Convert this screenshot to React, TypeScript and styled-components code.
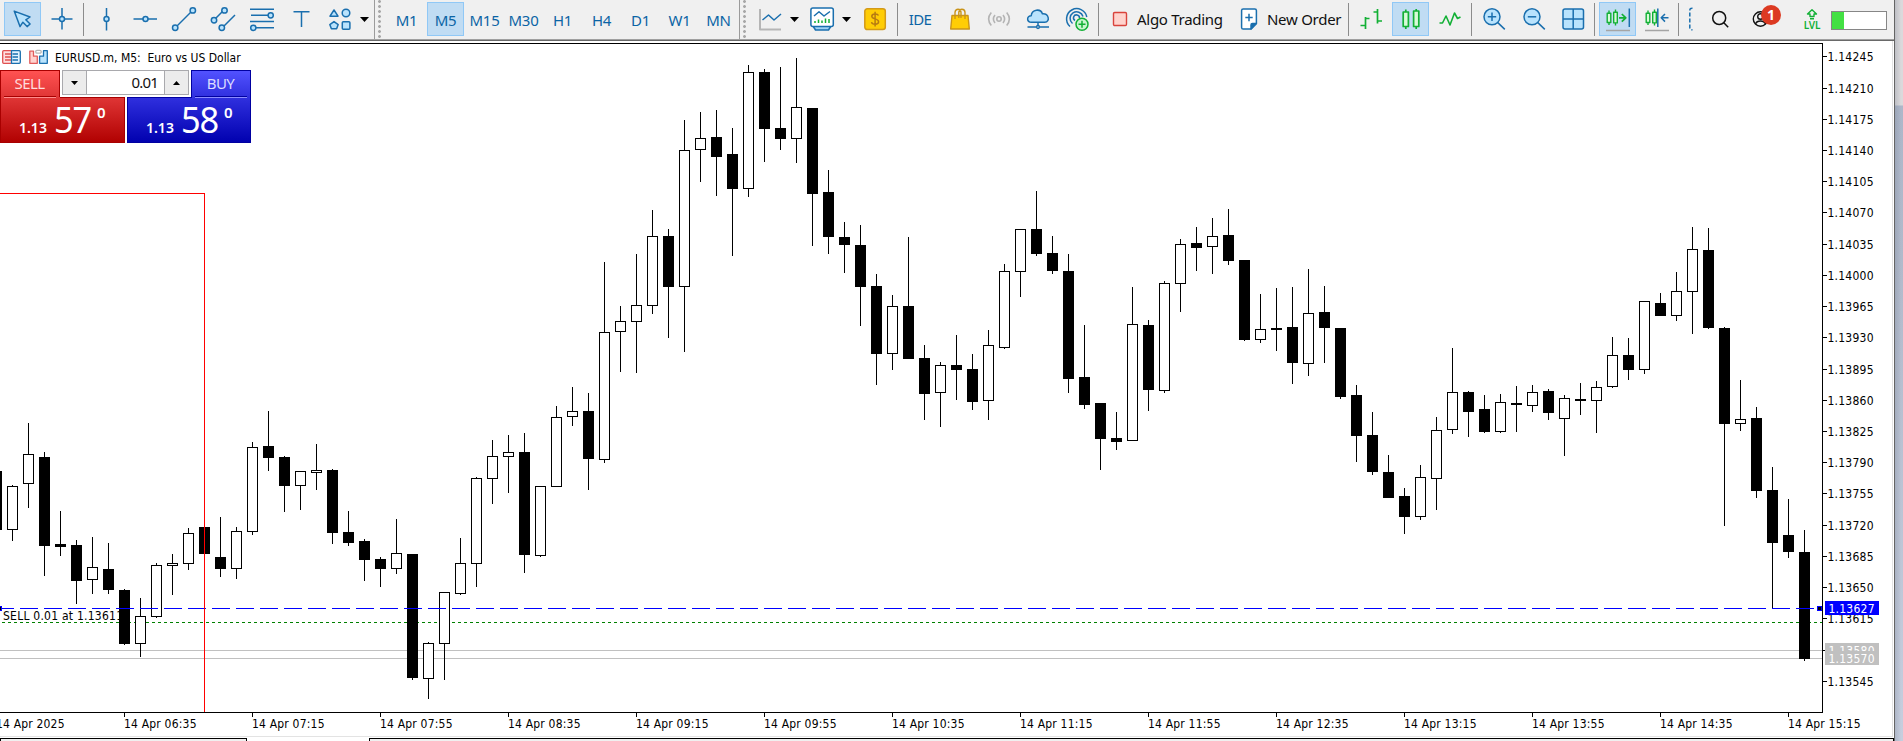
import React from "react";
import styled, { createGlobalStyle, css } from "styled-components";

const UI = `"Noto Sans", "Open Sans", sans-serif`;
const CHART = `"DejaVu Sans Condensed", "DejaVu Sans", sans-serif`;
const BLUE = "#1a6fae";
const FILL = "#b9e3fd";
const GREEN = "#12b035";

const Global = createGlobalStyle`
  html, body { margin: 0; padding: 0; background: #fff; overflow: hidden; }
  * { box-sizing: border-box; }
`;

const Screen = styled.div`
  display: flex;
  width: 1903px;
  height: 741px;
  overflow: hidden;
`;
const Terminal = styled.div`
  display: flex;
  flex-direction: column;
  width: 1894px;
  height: 741px;
  background: #fff;
`;
const WindowEdge = styled.div`
  width: 1px;
  background: #646464;
`;
const Desktop = styled.div`
  flex: 1;
  background: linear-gradient(90deg, rgba(90, 100, 120, 0.22), rgba(255, 255, 255, 0) 6px),
    linear-gradient(#dad9db 0 105px, #adb7c9 106px, #b1bacb 260px, #c6cede 741px);
`;

const Toolbar = styled.div`
  display: flex;
  align-items: flex-start;
  height: 41px;
  padding: 2px 0 0 3px;
  background: #f0f0f0;
  border-bottom: 1px solid #696969;
  box-shadow: inset 0 -1px 0 #a0a0a0;
  flex-shrink: 0;
`;
const Slot = styled.div<{ $w?: number; $ml?: number; $on?: boolean }>`
  display: flex;
  align-items: center;
  justify-content: center;
  flex: none;
  width: ${(p) => (p.$w ?? 39) - 2}px;
  height: 34px;
  margin: 0 1px 0 ${(p) => (p.$ml ?? 0) + 1}px;
  ${(p) =>
    p.$on &&
    css`
      background: #c0dcf3;
      box-shadow: inset 0 0 0 1px #90c8f6;
    `}
`;
const Divider = styled.div`
  flex: none;
  width: 1px;
  height: 33px;
  margin: 1px 2px 0;
  background: #8c8c8c;
`;
const Grip = styled.div<{ $lead: number }>`
  flex: none;
  width: 13px;
  height: 39px;
  margin: -2px 0 0 ${(p) => p.$lead}px;
  border-left: 1px solid #9b9b9b;
  background: radial-gradient(circle at 1.5px 1.5px, #a8a8a8 1.2px, transparent 1.6px) 3px 0 / 3px 5px repeat-y;
`;
const Period = styled.span`
  font: 15px/34px ${UI};
  letter-spacing: -0.3px;
  color: #0b64a5;
  padding-top: 2px;
`;
const Ide = styled(Period)`
  letter-spacing: -0.6px;
  padding-top: 0;
  margin-top: -1px;
`;
const Command = styled.div<{ $w: number; $pad: number }>`
  display: flex;
  align-items: center;
  flex: none;
  gap: 9px;
  width: ${(p) => p.$w}px;
  height: 34px;
  padding-left: ${(p) => p.$pad}px;
  font: 15px/34px ${UI};
  color: #111;
  white-space: nowrap;
  svg { flex: none; }
`;
const CommandLabel = styled.span`
  letter-spacing: -0.28px;
  margin-top: -1px;
`;
const LevelBar = styled.div`
  flex: none;
  width: 56px;
  height: 19px;
  margin: 9px 0 0 2px;
  border: 1px solid #868686;
  background: linear-gradient(90deg, #43e043 12px, #fff 12px);
`;

const ChartArea = styled.div`
  position: relative;
  height: 696px;
  border-right: 1px solid #e3e3e3;
  border-bottom: 1px solid #e3e3e3;
  margin-right: 1px;
  flex: none;
`;
const Plot = styled.svg`
  display: block;
  font: 12px ${CHART};
`;
const Overlay = styled.div`
  position: absolute;
  left: 0;
  top: 0;
  width: 251px;
`;
const Title = styled.div`
  display: flex;
  align-items: center;
  height: 29px;
  padding: 3px 0 0 2px;
  font: 12px ${CHART};
  white-space: pre;
  svg { flex: none; }
`;
const TitleText = styled.span`
  letter-spacing: -0.02px;
  margin-left: 6px;
  padding-top: 1px;
`;
const DealRow = styled.div<{ $gap?: number }>`
  display: flex;
  gap: ${(p) => p.$gap ?? 0}px;
`;
const skins = {
  sell: { a: "#ff5252", b: "#e03636", c: "#b00000", edge: "#a80000", light: "#ff8c8c", text: "#ffdcdc" },
  buy: { a: "#5252ff", b: "#3030df", c: "#0000ae", edge: "#0000a0", light: "#8c8cff", text: "#dcdcff" },
};
type Side = keyof typeof skins;
const DealTab = styled.div<{ $side: Side }>`
  width: 60px;
  height: 27px;
  padding: 0 3px;
  border: 1px solid ${(p) => skins[p.$side].edge};
  border-bottom: 0;
  background: linear-gradient(${(p) => skins[p.$side].a}, ${(p) => skins[p.$side].b});
  color: ${(p) => skins[p.$side].text};
  font: 15px/25px ${UI};
  text-align: center;
`;
const DealLabel = styled.div<{ $side: Side }>`
  height: 26px;
  padding-right: 1px;
  letter-spacing: -0.6px;
  border-bottom: 1px solid ${(p) => skins[p.$side].edge};
`;
const Quote = styled.div<{ $side: Side; $w: number; $from: number; $pad: number }>`
  display: flex;
  align-items: flex-start;
  width: ${(p) => p.$w}px;
  height: 46px;
  padding-left: ${(p) => p.$pad}px;
  color: #fff;
  background: linear-gradient(${(p) => skins[p.$side].edge}, ${(p) => skins[p.$side].edge}) ${(p) => p.$from}px 0 / 65px 1px
      no-repeat,
    linear-gradient(${(p) => skins[p.$side].light}, ${(p) => skins[p.$side].light}) ${(p) => (p.$from ? 4 : 68)}px 0 / 52px 1px
      no-repeat,
    linear-gradient(${(p) => skins[p.$side].b}, ${(p) => skins[p.$side].c});
  box-shadow: inset 1px 0 0 ${(p) => skins[p.$side].edge}, inset -1px -1px 0 ${(p) => skins[p.$side].edge};
`;
const QuoteBase = styled.span`
  width: 35px;
  font: 600 14px/18px ${UI};
  margin-top: 22px;
`;
const QuoteBig = styled.span`
  width: 46px;
  margin: 3px -3px 0 0;
  font: 37px/38px ${UI};
  letter-spacing: -1.2px;
  transform: scaleX(0.93);
  transform-origin: 0 0;
`;
const QuotePip = styled.span`
  font: 600 15px/18px ${UI};
  margin-top: 6px;
`;
const Volume = styled.div`
  display: flex;
  width: 127px;
  height: 25px;
  margin: 0 2px;
  border: 1px solid #a9a9ad;
  background: #fff;
`;
const Step = styled.div<{ $edge: "left" | "right" }>`
  display: flex;
  align-items: center;
  justify-content: center;
  width: 24px;
  background: #ececec;
  border-${(p) => (p.$edge === "left" ? "right" : "left")}: 1px solid #a9a9ad;
`;
const Lots = styled.div`
  flex: 1;
  padding-right: 6px;
  text-align: right;
  font: 15px/22px ${UI};
  letter-spacing: -0.8px;
  color: #111;
`;

const TabStrip = styled.div`
  display: flex;
  height: 3px;
  margin-top: 1px;
`;
const TabEdge = styled.div<{ $w?: number; $open?: boolean }>`
  ${(p) => (p.$w ? `width: ${p.$w}px;` : "flex: 1;")}
  ${(p) =>
    !p.$open &&
    css`
      background: #f0f0f0;
      border: 1px solid #000;
      border-bottom: 0;
    `}
`;

/* Icons */
const Glyph = styled.svg`
  flex: none;
  overflow: visible;
`;
const Ico: React.FC<{ w?: number; h?: number; color?: string; sw?: number; children: React.ReactNode }> = ({
  w = 24, h = 24, color = BLUE, sw = 1.5, children,
}) => (
  <Glyph width={w} height={h} viewBox={`0 0 ${w} ${h}`} fill="none" stroke={color} strokeWidth={sw} strokeLinejoin="round">
    {children}
  </Glyph>
);
const Caret = () => (
  <Ico w={9} h={5}><path d="M0 0H9L4.5 5Z" fill="#000" stroke="none" /></Ico>
);
const Node = ({ x, y, r = 2.5 }: { x: number; y: number; r?: number }) => <circle cx={x} cy={y} r={r} fill={FILL} />;

const CursorIcon = () => <Ico><path d="M3.2 4.1L19 10L14.8 12.8L19.1 17L16.1 19.6L11.9 15.2L9 19.6Z" fill={FILL} /></Ico>;
const CrossIcon = () => <Ico><path d="M1.5 12H22.5M12 1V22.5" /><Node x={12} y={12} /></Ico>;
const VLineIcon = () => <Ico><path d="M12.5 1V23.5" /><Node x={12.5} y={12} /></Ico>;
const HLineIcon = () => <Ico><path d="M.5 12H24" /><Node x={12.5} y={12} /></Ico>;
const TrendIcon = () => <Ico><path d="M3 21L21 3" /><Node x={3.2} y={20.8} r={2.7} /><Node x={20.8} y={3.4} r={2.7} /></Ico>;
const ChannelIcon = () => (
  <Ico><path d="M3 13L13 3M11 21L24 8" /><Node x={3} y={13.2} r={2.7} /><Node x={13.5} y={3.4} r={2.7} /><Node x={10.8} y={20.8} r={2.7} /></Ico>
);
const FiboIcon = () => (
  <Ico><path d="M0 2.2H24M1 8.3H18M0 14.5H24M4 20.8H24" /><Node x={20.7} y={8.3} r={2.6} /><Node x={3.3} y={20.8} r={2.6} /></Ico>
);
const TextIcon = () => <Ico><path d="M4.5 4.7H20.5M12.5 4.7V20" /></Ico>;
const ShapesIcon = () => (
  <Ico>
    <g fill={FILL}>
      <path d="M6 3L10 9.2H2Z" /><circle cx="18" cy="6" r="3.8" />
      <path d="M6 14.6L10.2 17.6L8.6 21.8H3.4L1.8 17.6Z" /><rect x="14.3" y="14.8" width="7.6" height="7.4" rx="1" />
    </g>
  </Ico>
);
const IndicatorIcon = () => (
  <Ico><path d="M2 2V22.5H23" stroke="#b5b5b5" strokeWidth="2" /><path d="M4.5 13L10.5 8L16 13L23 7" /></Ico>
);
const TemplateIcon = () => (
  <Ico>
    <path d="M3 19H21L18.5 23H5.5Z" fill="#9fd3f5" />
    <rect x=".9" y=".9" width="22.4" height="18.5" rx="2" fill="#fff" />
    <path d="M4 9L9 4.8L14 9L20 4.5" />
    <path d="M5 16V14M8.5 16V12.5M12 16V13.5M15.5 16V11.5M19 16V12" stroke={GREEN} />
  </Ico>
);
const CoinIcon = () => (
  <Ico color="#d49a17">
    <rect x="1.8" y="1.8" width="20.5" height="20.8" rx="2.5" fill="#ffcd05" />
    <path d="M15.5 8.6C15 7.3 13.7 6.9 12 6.9C10 6.9 8.8 7.7 8.8 9.2C8.8 12.8 15.6 10.9 15.6 14.8C15.6 16.5 14.2 17.2 12.2 17.2C10.2 17.2 8.8 16.5 8.5 15.1M12.1 4.8V19.4" stroke="#b77b12" />
  </Ico>
);
const BagIcon = () => (
  <Ico color="#c9941a" sw={1.4}>
    <path d="M4 8.5H20L21.3 22H2.7Z" fill="#ffcd05" />
    <path d="M7 12V5.5C7 1.2 13 1.2 13 5.5V11M10.8 11V5.5C10.8 1.2 17 1.2 17 5.5V12" />
  </Ico>
);
const SignalIcon = () => (
  <Ico color="#b4b4b4" sw={1.6}>
    <circle cx="12" cy="12" r="2.2" />
    <path d="M8 8Q4.8 12 8 16M4.3 5.5Q-1 12 4.3 18.5M16 8Q19.2 12 16 16M19.7 5.5Q25 12 19.7 18.5" />
  </Ico>
);
const CloudIcon = () => (
  <Ico>
    <path d="M5.5 15.3C.3 15 .5 8.8 5.2 8.8C5.8 2.2 14.6 1.2 16.4 6.8C22.8 6.3 24.6 14.6 18.8 15.3Z" fill={FILL} />
    <path d="M12 15.5V18.5M1.5 20H10M14 20H23" /><circle cx="12" cy="20" r="1.4" />
  </Ico>
);
const RadarIcon = () => (
  <Ico>
    <path d="M5 19.5A10.2 10.2 0 1 1 21.8 10" /><path d="M7.5 16.5A6.6 6.6 0 1 1 18 9.5" /><path d="M10 13.5A3 3 0 1 1 14.5 11" />
    <circle cx="17" cy="17.2" r="6" fill="#c9f5cf" stroke={GREEN} /><path d="M13.5 17.2H20.5M17 13.7V20.7" stroke={GREEN} />
  </Ico>
);
const StopIcon = () => <Ico w={16} h={16} color="#d9433c" sw={1.4}><rect x="1.5" y="1.5" width="13" height="13" rx="1.2" fill="#ffd3cd" /></Ico>;
const OrderIcon = () => (
  <Ico w={18} h={24}>
    <path d="M3.2 2H14.8Q16.4 2 16.4 3.6V16.5L11 22H3.2Q1.6 22 1.6 20.4V3.6Q1.6 2 3.2 2Z" fill="#fff" />
    <path d="M16.4 16.5H12.5Q11 16.5 11 18V22Z" fill={BLUE} /><path d="M5.3 10.5H12.7M9 6.8V14.2" />
  </Ico>
);
const BarsIcon = () => (
  <Ico color={GREEN} sw={1.7}><path d="M6.5 10V22M1.5 18.5H6.5M6.5 11.5H10.5M18.5 2V16.5M14.5 5H18.5M18.5 14H23" /></Ico>
);
const CandlesIcon = () => (
  <Ico color={GREEN} sw={1.7}>
    <path d="M6.8 2.5V22M17.2 2V22" /><rect x="4.2" y="5" width="5.2" height="14.5" fill="#d8fbd8" /><rect x="14.6" y="4" width="5.2" height="15.5" fill="#d8fbd8" />
  </Ico>
);
const LineIcon = () => <Ico color={GREEN} sw={1.6}><path d="M1.5 16H4.5L8 9L12 18L16.5 6L19.5 11.5L22.5 10" /></Ico>;
const ZoomIcon = ({ plus }: { plus?: boolean }) => (
  <Ico><circle cx="10" cy="9.8" r="8" fill={FILL} /><path d="M15.8 15.6L22.8 22.4" /><path d={plus ? "M5.8 9.8H14.2M10 5.6V14" : "M5.8 9.8H14.2"} /></Ico>
);
const TileIcon = () => <Ico><rect x="2" y="2" width="20.5" height="20" rx="2" fill={FILL} /><path d="M12.2 2V22M2 12H22.5" /></Ico>;
const MiniCandles = () => (
  <g stroke={GREEN} strokeWidth="1.4"><path d="M3 3.5V18M9.5 2.5V18.5" /><rect x="1.2" y="6.2" width="3.6" height="9.3" fill="#d8fbd8" /><rect x="7.7" y="5.3" width="3.6" height="10.6" fill="#d8fbd8" /></g>
);
const ScrollIcon = () => (
  <Ico><MiniCandles /><path d="M13 10.8H19.5M15.8 7L19.8 10.8L15.8 14.6" stroke={GREEN} strokeWidth="1.7" /><path d="M23.3 1.5V20" /><path d="M0 23.5H24" stroke="#a5a5a5" /></Ico>
);
const ShiftIcon = () => (
  <Ico><MiniCandles /><path d="M12.8 1.5V20M23.5 10.8H16.5M20 7L16.2 10.8L20 14.6" /><path d="M0 23.5H24" stroke="#a5a5a5" /></Ico>
);
const EdgeIcon = () => <Ico w={6} h={24}><path d="M4.5 1.2Q1.8 1 1.8 3.5V20.5Q1.8 23 4.5 22.8" strokeDasharray="4 2" /></Ico>;
const SearchIcon = () => <Ico w={18} h={18} color="#111" sw={1.5}><circle cx="8.2" cy="8" r="6.5" /><path d="M12.8 12.8L17.2 17.2" /></Ico>;
const Badge = styled.span`
  position: absolute;
  left: 9px;
  top: -5px;
  width: 20px;
  height: 20px;
  border-radius: 50%;
  background: #dc3a22;
  color: #fff;
  font: 700 14px/20px ${UI};
  text-align: center;
`;
const Account = styled.div`
  position: relative;
  width: 30px;
  height: 18px;
`;
const AccountIcon = () => (
  <Ico w={18} h={18} color="#111" sw={1.4}><circle cx="8.5" cy="9" r="7.2" /><circle cx="8.5" cy="6.5" r="2.8" /><path d="M3.5 14Q4.5 11 8.5 11Q12.5 11 13.5 14" /></Ico>
);
const Lvl = styled.div`
  display: flex;
  flex-direction: column;
  align-items: center;
  font: 600 10px/9px ${UI};
  letter-spacing: -0.1px;
  color: ${GREEN};
  gap: 1px;
`;
const LvlIcon = () => <Ico w={12} h={11} color={GREEN} sw={1.4}><path d="M6 .7L10.5 5H8V7.5H4V5H1.5ZM4 9.8H8" /></Ico>;
const DepthIcon = () => (
  <Ico w={19} h={14} sw={1.3}>
    <path d="M9.5 .7H1.7Q.7 .7 .7 1.7V12.3Q.7 13.3 1.7 13.3H9.5" fill="#ffe0e0" stroke="#e05050" />
    <path d="M9.5 .7H17.3Q18.3 .7 18.3 1.7V12.3Q18.3 13.3 17.3 13.3H9.5Z" fill="#e3f3ff" />
    <path d="M3 4H9M3 7H9M3 10H9" stroke="#e05050" /><path d="M10.5 4H16M10.5 7H16M10.5 10H16" />
  </Ico>
);
const TradeIcon = () => (
  <Ico w={19} h={14} sw={1.3}>
    <path d="M.8 1.2H4.5V6.2H8.3V13.3H.8Z" fill="#ffd3cf" stroke="#e05c5c" />
    <path d="M14.5 .7H18.3V13.3H10.6V6.2H14.5Z" fill={FILL} />
    <rect x="6.8" y=".3" width="5.4" height="2.8" rx="1.2" fill="#fff" stroke="#b5b5b5" />
  </Ico>
);

/* Candles, one per five minutes: direction, high, body top, body bottom, low */
type Candle = [0 | 1, number, number, number, number];
const U = 1, D = 0;
const candles: Candle[] = [
  [D,471,471,530,530],[U,485,486,530,541],[U,423,454,484,508],[D,452,457,546,576],[D,511,544,547,556],[D,540,545,581,604],
  [U,537,567,580,594],[D,543,569,590,594],[D,589,590,644,645],[U,598,616,644,657],[U,563,565,617,618],[U,554,563,566,595],
  [U,528,533,564,570],[D,527,527,554,554],[D,517,557,569,577],[U,527,531,569,579],[U,442,447,532,535],[D,411,446,458,471],
  [D,456,457,486,512],[U,471,471,486,510],[U,444,470,473,490],[D,469,470,533,544],[D,511,532,543,546],[D,539,541,560,581],
  [D,557,559,569,587],[U,519,553,569,574],[D,554,554,678,680],[U,642,643,679,699],[U,592,592,644,680],[U,538,563,594,595],
  [U,477,478,564,587],[U,440,456,479,504],[U,435,452,457,493],[D,433,452,555,573],[U,486,486,556,557],[U,406,417,487,487],
  [U,387,411,417,426],[D,393,411,459,490],[U,262,332,460,463],[U,306,321,332,372],[U,254,305,322,373],[U,210,236,306,314],
  [D,229,236,287,338],[U,120,150,287,352],[U,112,138,150,182],[D,110,137,157,196],[D,128,154,189,256],[U,65,72,189,197],
  [D,69,72,129,162],[D,67,128,139,150],[U,58,107,139,163],[D,108,108,194,246],[D,170,192,237,254],[D,222,237,245,273],
  [D,225,245,287,326],[D,274,286,354,385],[U,295,306,354,370],[D,237,306,359,359],[D,345,358,394,420],[U,362,365,393,427],
  [D,335,365,370,400],[D,354,369,402,410],[U,330,345,401,420],[U,264,271,348,349],[U,229,229,272,297],[D,191,229,254,256],
  [D,236,253,271,274],[D,254,271,379,393],[D,325,377,405,409],[D,403,403,439,470],[D,412,438,442,450],[U,287,324,441,441],
  [D,320,325,390,411],[U,281,283,391,393],[U,239,244,284,312],[D,227,243,248,271],[U,218,236,247,274],[D,209,235,261,265],
  [D,260,260,340,341],[U,294,329,340,343],[D,288,328,330,351],[D,287,327,363,384],[U,269,313,364,376],[D,286,312,328,363],
  [D,328,328,397,399],[D,385,395,436,462],[D,412,435,472,475],[D,455,472,498,498],[D,488,496,517,534],[U,465,477,517,520],
  [U,417,430,479,510],[U,348,392,430,434],[D,391,392,412,437],[D,395,409,432,433],[U,394,402,432,433],[D,386,403,405,432],
  [U,385,392,406,412],[D,389,391,413,420],[U,395,398,419,456],[D,383,399,401,415],[U,381,387,401,433],[U,337,355,387,388],
  [D,338,355,370,380],[U,301,301,370,374],[D,293,303,316,316],[U,272,291,316,321],[U,227,249,292,334],[D,228,250,328,329],
  [D,327,328,424,526],[U,380,419,424,431],[D,407,418,491,498],[D,467,490,543,609],[D,499,535,552,558],[D,530,552,659,661],
];
const prices = Array.from({ length: 21 }, (_, k) => ({
  text: ((114245 - 35 * k) / 100000).toFixed(5),
  y: Math.floor(56.85 + 31.22 * k),
}));
const times = ["06:35","07:15","07:55","08:35","09:15","09:55","10:35","11:15","11:55","12:35","13:15","13:55","14:35","15:15"];

const PriceTag = ({ y, fill, text }: { y: number; fill: string; text: string }) => (
  <g>
    <rect x={1825} y={y} width={54} height={14} fill={fill} />
    <text x={1828.5} y={y + 12} fill="#fff" textLength={46}>{text}</text>
  </g>
);

const Chart = () => (
  <Plot width={1892} height={695} viewBox="0 41 1892 695" shapeRendering="crispEdges">
    <rect x={0} y={650} width={1822} height={1} fill="#c0c0c0" />
    <rect x={0} y={658} width={1822} height={1} fill="#c0c0c0" />
    <path d="M2 622.5H1822" stroke="#008000" strokeDasharray="3 3" />
    <text x={3} y={620} textLength={120}>SELL 0.01 at 1.13611</text>
    {candles.map(([up, high, top, bottom, low], i) => {
      const x = -4 + i * 16;
      return (
        <g key={i}>
          <rect x={x} y={high} width={1} height={low - high} />
          <rect x={x - 5} y={top} width={11} height={bottom - top} />
          {up === U && <rect x={x - 4} y={top + 1} width={9} height={bottom - top - 2} fill="#fff" />}
        </g>
      );
    })}
    <path d="M-4 608.5H1822" stroke="#00f" strokeDasharray="18 6" />
    <rect x={-3} y={606} width={5} height={5} fill="#00f" />
    <rect x={-2} y={607} width={3} height={3} />
    <rect x={1817} y={606} width={5} height={5} fill="#00f" />
    <rect x={1818} y={607} width={3} height={3} />
    <path d="M0 193.5H204.5V712" fill="none" stroke="#f00" />
    <path d="M0 43.5H1822.5V712.5H0" fill="none" stroke="#000" />
    {prices.map((p) => (
      <g key={p.text}>
        <rect x={1823} y={p.y} width={4} height={1} />
        {p.text !== "1.13580" && <text x={1827.5} y={p.y + 5} textLength={46}>{p.text}</text>}
      </g>
    ))}
    <PriceTag y={601} fill="#0000ff" text="1.13627" />
    <PriceTag y={643} fill="#c0c0c0" text="1.13580" />
    <PriceTag y={651} fill="#c0c0c0" text="1.13570" />
    <text x={-4} y={728} textLength={68.5}>14 Apr 2025</text>
    {times.map((t, k) => (
      <g key={t}>
        <rect x={124 + 128 * k} y={713} width={1} height={4} />
        <text x={124 + 128 * k} y={728} textLength={72.5}>{`14 Apr ${t}`}</text>
      </g>
    ))}
  </Plot>
);

export default function App() {
  return (
    <>
      <Global />
      <Screen>
        <Terminal>
          <Toolbar>
            <Slot $on><CursorIcon /></Slot>
            <Slot><CrossIcon /></Slot>
            <Divider />
            <Slot><VLineIcon /></Slot>
            <Slot><HLineIcon /></Slot>
            <Slot><TrendIcon /></Slot>
            <Slot><ChannelIcon /></Slot>
            <Slot><FiboIcon /></Slot>
            <Slot><TextIcon /></Slot>
            <Slot><ShapesIcon /></Slot>
            <Slot $w={10}><Caret /></Slot>
            <Grip $lead={5} />
            {["M1", "M5", "M15", "M30", "H1", "H4", "D1", "W1", "MN"].map((p) => (
              <Slot key={p} $on={p === "M5"}><Period>{p}</Period></Slot>
            ))}
            <Grip $lead={1} />
            <Slot $w={36}><IndicatorIcon /></Slot>
            <Slot $w={12}><Caret /></Slot>
            <Slot $w={44}><TemplateIcon /></Slot>
            <Slot $w={5}><Caret /></Slot>
            <Slot $w={40} $ml={6}><CoinIcon /></Slot>
            <Divider />
            <Slot $w={40}><Ide>IDE</Ide></Slot>
            <Slot><BagIcon /></Slot>
            <Slot><SignalIcon /></Slot>
            <Slot><CloudIcon /></Slot>
            <Slot><RadarIcon /></Slot>
            <Divider />
            <Command $w={132} $pad={11}><StopIcon /><CommandLabel>Algo Trading</CommandLabel></Command>
            <Command $w={113} $pad={7}><OrderIcon /><CommandLabel>New Order</CommandLabel></Command>
            <Divider />
            <Slot $w={40}><BarsIcon /></Slot>
            <Slot $on><CandlesIcon /></Slot>
            <Slot><LineIcon /></Slot>
            <Divider />
            <Slot $w={40}><ZoomIcon plus /></Slot>
            <Slot><ZoomIcon /></Slot>
            <Slot><TileIcon /></Slot>
            <Divider />
            <Slot $on $ml={1}><ScrollIcon /></Slot>
            <Slot><ShiftIcon /></Slot>
            <Divider />
            <Slot $w={20}><EdgeIcon /></Slot>
            <Slot $w={38}><SearchIcon /></Slot>
            <Slot $w={56}><Account><AccountIcon /><Badge>1</Badge></Account></Slot>
            <Slot $w={34}><Lvl><LvlIcon />LVL</Lvl></Slot>
            <LevelBar />
          </Toolbar>
          <ChartArea>
            <Chart />
            <Overlay>
              <Title>
                <DepthIcon />
                <Slot $w={21} $ml={7}><TradeIcon /></Slot>
                <TitleText>EURUSD.m, M5:  Euro vs US Dollar</TitleText>
              </Title>
              <DealRow>
                <DealTab $side="sell"><DealLabel $side="sell">SELL</DealLabel></DealTab>
                <Volume>
                  <Step $edge="left"><Ico w={7} h={4}><path d="M0 0H7L3.5 4Z" fill="#000" stroke="none" /></Ico></Step>
                  <Lots>0.01</Lots>
                  <Step $edge="right"><Ico w={7} h={4}><path d="M0 4H7L3.5 0Z" fill="#000" stroke="none" /></Ico></Step>
                </Volume>
                <DealTab $side="buy"><DealLabel $side="buy">BUY</DealLabel></DealTab>
              </DealRow>
              <DealRow $gap={2}>
                <Quote $side="sell" $w={125} $from={60} $pad={19}>
                  <QuoteBase>1.13</QuoteBase><QuoteBig>57</QuoteBig><QuotePip>0</QuotePip>
                </Quote>
                <Quote $side="buy" $w={124} $from={0} $pad={19}>
                  <QuoteBase>1.13</QuoteBase><QuoteBig>58</QuoteBig><QuotePip>0</QuotePip>
                </Quote>
              </DealRow>
            </Overlay>
          </ChartArea>
          <TabStrip>
            <TabEdge $w={247} />
            <TabEdge $w={122} $open />
            <TabEdge />
          </TabStrip>
        </Terminal>
        <WindowEdge />
        <Desktop />
      </Screen>
    </>
  );
}
